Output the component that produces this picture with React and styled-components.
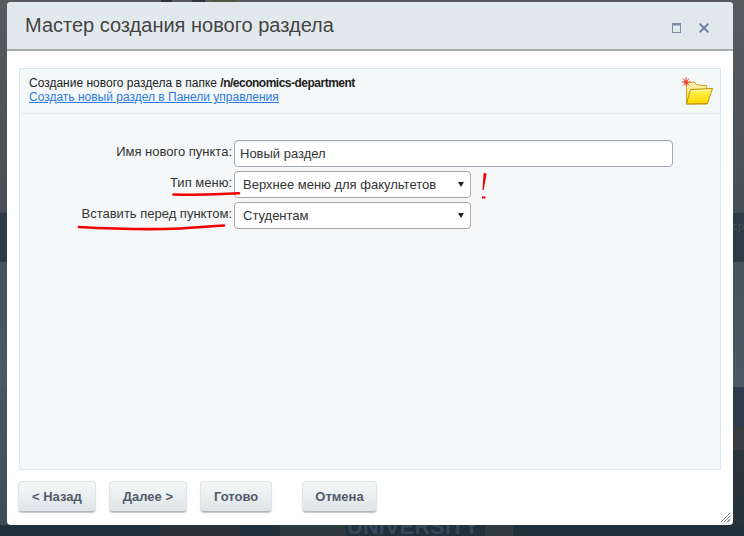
import React from 'react'
import styled, { createGlobalStyle } from 'styled-components'

const GlobalStyle = createGlobalStyle`
    html, body {
        margin: 0;
        padding: 0;
        background: #2c3a46;
    }
    body {
        font-family: "Liberation Sans", Arial, sans-serif;
    }
`

const FolderIcon = () => (
    <FolderWrap width="34" height="30" viewBox="0 0 34 30">
        <defs>
            <linearGradient id="folderBack" x1="0" y1="0" x2="0" y2="1">
                <stop offset="0" stopColor="#fff6b8" />
                <stop offset="1" stopColor="#f2cf45" />
            </linearGradient>
            <linearGradient id="folderFront" x1="0" y1="0" x2="0" y2="1">
                <stop offset="0" stopColor="#fff35c" />
                <stop offset="1" stopColor="#ffd800" />
            </linearGradient>
        </defs>
        <path d="M7 27.5 L30 27.5 L33 21 L31 27 Z" fill="#b9c0c4" opacity=".6" />
        <path d="M6.5 5.5 L14 5 L17 8 L26.5 8.5 L27 12 L27 27 L6.5 27 Z" fill="url(#folderBack)" stroke="#c9a018" strokeWidth="1" />
        <path d="M10.5 12.5 L32.5 11.5 L27.5 26.5 L6.5 27 Z" fill="url(#folderFront)" stroke="#c28f0c" strokeWidth="1" />
        <path d="M11 14 L30 13.2" stroke="#fffbd0" strokeWidth="1" />
        <path d="M6 .5 L6 9 M1.5 5 L10.5 5 M3 1.5 L9 8.5 M9 1.5 L3 8.5" stroke="#f5402c" strokeWidth="1" />
        <circle cx="6" cy="5" r="1.6" fill="#f5301c" />
    </FolderWrap>
)

const App = () => (
    <Page>
        <GlobalStyle />
        <TopBand>
            <TopBlock $w={11} $ml={161} />
            <TopBlock $w={13} $ml={20} />
            <TopBlock $w={24} $ml={7} $color="#4c5a44" />
            <TopText>UNIVERSITY DEPARTMENT</TopText>
        </TopBand>
        <NavBand>
            <NavText>ср</NavText>
        </NavBand>
        <MiddleBand />
        <PhotoBand />
        <FooterBand>
            <FooterBlock $w={80} $ml={160} />
            <FooterBlock $w={66} $ml={40} $color="#2c3a3e" />
            <Brand>UNIVERSITY</Brand>
            <FooterBlock $w={28} $ml={6} $color="#2e3a3e" />
        </FooterBand>

        <Dialog>
            <Header>
                <Title>Мастер создания нового раздела</Title>
                <HeaderIcons>
                    <svg width="10" height="10" viewBox="0 0 10 10">
                        <rect x="1.5" y=".5" width="8" height="9" fill="none" stroke="#7b8ca6" />
                        <path d="M1 1.5H10" stroke="#7b8ca6" strokeWidth="2" />
                    </svg>
                    <svg width="10" height="10" viewBox="0 0 10 10">
                        <path d="M.7 .7L9.3 9.3M9.3 .7L.7 9.3" stroke="#6f83a0" strokeWidth="2" />
                    </svg>
                </HeaderIcons>
            </Header>

            <Panel>
                <PanelHead>
                    <div>
                        <HeadLine>Создание нового раздела в папке <b>/n/economics-department</b></HeadLine>
                        <HeadLink href="#">Создать новый раздел в Панели управления</HeadLink>
                    </div>
                    <FolderIcon />
                </PanelHead>
                <PanelBody>
                    <FormGrid>
                        <Label>Имя нового пункта:</Label>
                        <TextField defaultValue="Новый раздел" />
                        <Label>Тип меню:</Label>
                        <SelectBox>
                            <Select defaultValue="top">
                                <option value="top">Верхнее меню для факультетов</option>
                            </Select>
                        </SelectBox>
                        <Label>Вставить перед пунктом:</Label>
                        <SelectBox>
                            <Select defaultValue="students">
                                <option value="students">Студентам</option>
                            </Select>
                        </SelectBox>
                    </FormGrid>
                </PanelBody>
            </Panel>

            <Footer>
                <Button>&lt; Назад</Button>
                <Button>Далее &gt;</Button>
                <Button>Готово</Button>
                <CancelButton>Отмена</CancelButton>
            </Footer>
            <Grip />
        </Dialog>

        <Marks width="744" height="536" viewBox="0 0 744 536">
            <g fill="none" stroke="#f00000" strokeLinecap="round" strokeWidth="2.6">
                <path d="M173.5 194.5 C190 195 220 194.5 239 193.3" />
                <path d="M79 227 C105 228.5 135 229.5 165 229 C185 228.5 205 226.5 224 225.5" />
            </g>
            <path d="M483.6 173 L486.6 173.5 L483.7 190 L482.5 190 Z" fill="#f00000" />
            <path d="M482 196.6 L485.6 196.6 L485.3 198.6 L482 198.6 Z" fill="#f00000" />
        </Marks>
    </Page>
)

export default App

const Page = styled.div`
    position: relative;
    width: 744px;
    height: 536px;
    overflow: hidden;
    display: flex;
    flex-direction: column;
`

const TopBand = styled.div`
    height: 213px;
    display: flex;
    align-items: flex-start;
    background: linear-gradient(#585a5e, #454f58);
`

const TopBlock = styled.div`
    width: ${p => p.$w}px;
    height: 3px;
    margin-left: ${p => p.$ml}px;
    background: ${p => p.$color || '#2f3338'};
`

const TopText = styled.div`
    margin: -12px 0 0 4px;
    font-size: 13px;
    color: #777b80;
    white-space: nowrap;
`

const NavBand = styled.div`
    height: 49px;
    box-sizing: border-box;
    padding-top: 7px;
    background: #2e3a45;
    display: flex;
    justify-content: flex-end;
`

const NavText = styled.div`
    font-size: 11px;
    color: #47525c;
`

const MiddleBand = styled.div`
    height: 125px;
    background: linear-gradient(#46525c, #4c5863);
`

const PhotoBand = styled.div`
    flex: 1;
    background:
        linear-gradient(#2f3b4c 0, #2f3b4c 40px, #3b3b42 40px, #3b3b42 63px, #2c363d 63px, #26323c 100%) right / 120px 100% no-repeat,
        linear-gradient(#4a5660, #404c56);
`

const FooterBand = styled.div`
    height: 11px;
    flex: none;
    display: flex;
    align-items: flex-end;
    background: #22303c;
`

const FooterBlock = styled.div`
    width: ${p => p.$w}px;
    height: 11px;
    margin-left: ${p => p.$ml}px;
    background: ${p => p.$color || '#2a3238'};
`

const Brand = styled.div`
    margin-left: 1px;
    line-height: 19px;
    font-size: 22px;
    font-weight: bold;
    color: #34485a;
`

const Dialog = styled.div`
    position: absolute;
    left: 7px;
    top: 2px;
    width: 726px;
    height: 523px;
    background: #fff;
    border-radius: 4px;
    display: flex;
    flex-direction: column;
`

const Header = styled.div`
    height: 47px;
    flex: none;
    display: flex;
    align-items: center;
    justify-content: space-between;
    padding: 0 24px 0 18px;
    background: #e2e9ec;
    border-radius: 4px 4px 0 0;
    border-bottom: 2px solid #a9aaab;
`

const Title = styled.div`
    font-size: 20px;
    color: #444;
    padding-bottom: 1px;
`

const HeaderIcons = styled.div`
    display: flex;
    gap: 18px;
    margin-top: 4px;
`

const Panel = styled.div`
    flex: 1;
    margin: 17px 12px 0;
    display: flex;
    flex-direction: column;
    border: 1px solid #dce7ed;
    background: #f5f7f8;
`

const PanelHead = styled.div`
    height: 45px;
    flex: none;
    display: flex;
    justify-content: space-between;
    padding: 7px 6px 0 9px;
    box-sizing: border-box;
    background: #f4f8f9;
    border-bottom: 1px solid #e4ebee;
    font-size: 12px;
    line-height: 14px;
`

const FolderWrap = styled.svg`
    margin-top: 1px;
    flex: none;
`

const HeadLine = styled.div`
    color: #222;

    b {
        font-weight: bold;
        letter-spacing: -.5px;
    }
`

const HeadLink = styled.a`
    color: #2a7ae2;
    text-decoration: underline;
`

const PanelBody = styled.div`
    flex: 1;
    padding-top: 26px;
`

const FormGrid = styled.div`
    display: grid;
    grid-template-columns: 212px 439px;
    column-gap: 2px;
    row-gap: 4px;
    grid-auto-rows: 27px;
    font-size: 13px;
`

const Label = styled.div`
    justify-self: end;
    align-self: center;
    padding-bottom: 5px;
    color: #333;
`

const TextField = styled.input`
    box-sizing: border-box;
    width: 100%;
    height: 27px;
    padding: 0 5px;
    background: #fff;
    border: 1px solid #a3a9b5;
    border-radius: 4px;
    box-shadow: inset 0 1px 1px rgba(0, 0, 0, .08);
    font: 13px "Liberation Sans", Arial, sans-serif;
    color: #333;
    outline: none;
`

const SelectBox = styled.div`
    position: relative;
    width: 237px;

    &:after {
        content: '';
        position: absolute;
        right: 7px;
        top: 11px;
        border-style: solid;
        border-width: 5px 3px 0;
        border-color: #222 transparent transparent;
        pointer-events: none;
    }
`

const Select = styled.select`
    appearance: none;
    box-sizing: border-box;
    width: 100%;
    height: 27px;
    padding: 0 20px 0 8px;
    background: #fff;
    border: 1px solid #a9a9a9;
    border-radius: 4px;
    font: 13px "Liberation Sans", Arial, sans-serif;
    color: #333;
    outline: none;
`

const Footer = styled.div`
    flex: none;
    display: flex;
    gap: 13px;
    height: 31px;
    margin: 11px 0 13px 11px;
`

const Button = styled.button`
    box-sizing: border-box;
    height: 31px;
    padding: 0 13px;
    border: 1px solid #dfe3e4;
    border-bottom-color: #b5b9bb;
    border-radius: 4px;
    background: linear-gradient(#f6f8f8, #dde5e8);
    box-shadow: 0 1px 1px #c4c8ca;
    font: bold 13px "Liberation Sans", Arial, sans-serif;
    color: #535c69;
`

const CancelButton = styled(Button)`
    margin-left: 17px;
    padding: 0 12px;
`

const Grip = styled.div`
    position: absolute;
    right: 3px;
    bottom: 3px;
    width: 11px;
    height: 11px;
    clip-path: polygon(100% 0, 100% 100%, 0 100%);
    background: repeating-linear-gradient(135deg, #8f9396 0 1px, #fff 1px 2.2px);
`

const Marks = styled.svg`
    position: absolute;
    left: 0;
    top: 0;
    pointer-events: none;
`
